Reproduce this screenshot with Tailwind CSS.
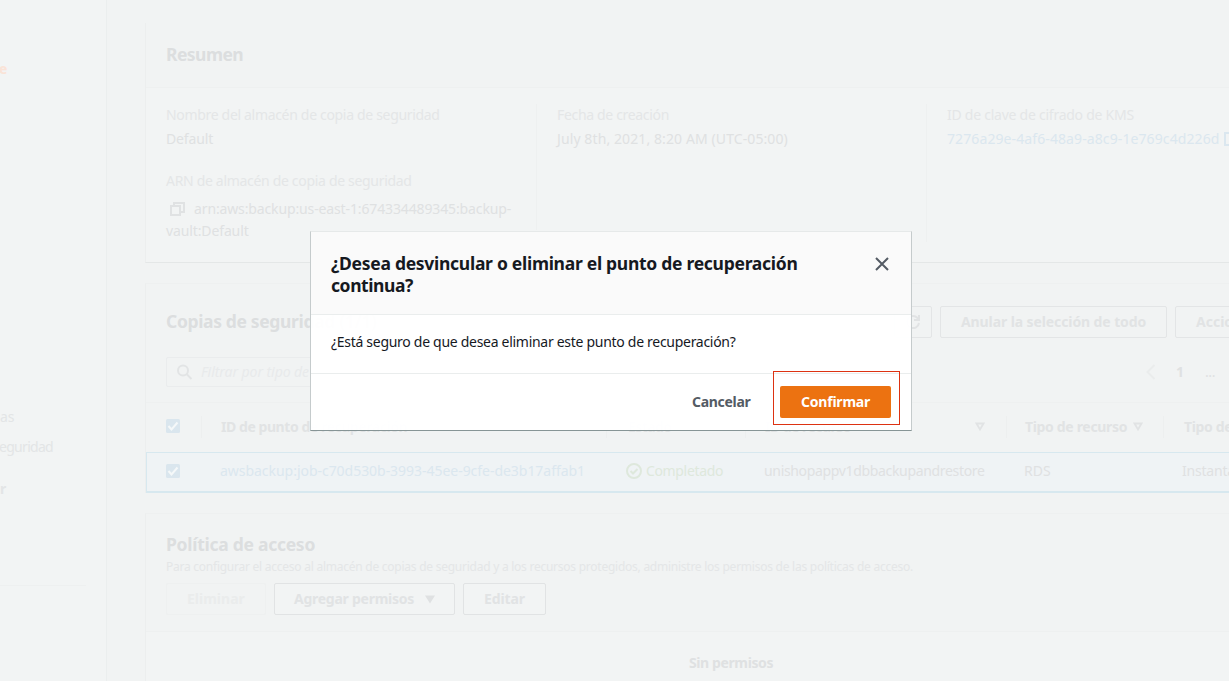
<!DOCTYPE html>
<html lang="es">
<head>
<meta charset="utf-8">
<title>AWS Backup</title>
<script src="https://cdn.jsdelivr.net/npm/@tailwindcss/browser@4"></script>
</head>
<body class="w-[1229px] h-[681px] overflow-hidden bg-[#f1f3f3] font-['Noto_Sans','Open_Sans',sans-serif] text-[14px] leading-[22px] text-[#dfe1e2]">
<div class="relative flex w-[1229px] h-[681px] overflow-hidden whitespace-nowrap">
  <aside class="w-[107px] shrink-0 border-r border-[#ebeeee] bg-[#f2f4f4] pt-[58px] flex flex-col text-[#e3e5e6]">
    <span class="-ml-px font-bold text-[#fae3d7]">e</span>
    <span class="mt-[326px]">as</span>
    <span class="mt-2 -ml-px tracking-[-0.7px]">eguridad</span>
    <span class="mt-[20px] font-bold">r</span>
    <hr class="mt-[85px] w-[86px] border-[#eef0f0]">
  </aside>
  <main class="w-[1200px] shrink-0 pl-[38px] pt-[23px] flex flex-col gap-5">
    <section class="h-[240px] shrink-0 border-l border-b border-l-[#eceeee] border-b-[#e4e7e7] bg-[#f2f4f4]">
      <header class="h-[65px] bg-[#f1f3f3] border-b border-[#eef0f0] pl-5 pt-5">
        <h2 class="text-[17.5px] font-bold text-[#dcdedf] tracking-[-0.55px]">Resumen</h2>
      </header>
      <div class="flex pt-4">
        <div class="w-[391px] h-[126px] pl-5 border-r border-[#eef0f0]">
          <div class="text-[#e4e6e7] tracking-[-0.32px]">Nombre del almacén de copia de seguridad</div>
          <div class="mt-0.5 tracking-[-0.15px]">Default</div>
          <div class="mt-5 text-[#e4e6e7] tracking-[-0.315px]">ARN de almacén de copia de seguridad</div>
          <div class="mt-1.5 flex items-center">
            <svg class="ml-1 mr-2 w-4 h-4" viewBox="0 0 16 16" fill="none" stroke="#e0e2e3" stroke-width="2"><path d="M1 5h9v9H1zM4 5V2h10v9h-4"/></svg>
            <span class="tracking-[-0.13px]">arn:aws:backup:us-east-1:674334489345:backup-</span>
          </div>
          <div class="tracking-[-0.12px]">vault:Default</div>
        </div>
        <div class="w-[390px] h-[138px] pl-5 border-r border-[#eef0f0]">
          <div class="text-[#e4e6e7] tracking-[-0.33px]">Fecha de creación</div>
          <div class="mt-0.5 tracking-[0.1px]">July 8th, 2021, 8:20 AM (UTC-05:00)</div>
        </div>
        <div class="pl-5">
          <div class="text-[#e4e6e7] tracking-[-0.25px]">ID de clave de cifrado de KMS</div>
          <div class="mt-0.5 flex items-center text-[#dbe7ef]"><span class="tracking-[0.1px]">7276a29e-4af6-48a9-a8c9-1e769c4d226d</span>
            <svg class="ml-1 w-4 h-4" viewBox="0 0 16 16" fill="none" stroke="#dbe7ef" stroke-width="2"><path d="M7 2H2v12h12V9M10 2h4v4M14 2 8 8"/></svg></div>
        </div>
      </div>
    </section>
    <section class="h-[210px] shrink-0 border-l border-t border-l-[#eceeee] border-t-[#eef0f0]">
      <div class="h-[119px] pl-5 pt-[22px] border-b border-[#eef0f0]">
        <div class="flex">
          <h2 class="w-[728px] pt-1 text-[17.5px] font-bold text-[#dcdedf] tracking-[-0.35px]">Copias de seguridad (1/1)</h2>
          <div class="flex gap-2 font-bold text-[#e1e3e4]">
            <div class="w-[38px] h-8 border border-[#e3e5e6] rounded-[2px] flex items-center justify-center">
              <svg class="w-4 h-4" viewBox="0 0 16 16" fill="none" stroke="#e1e3e4" stroke-width="2"><path d="M9 6h5V1M14 9a6 6 0 1 1-1.500-5L14 6"/></svg></div>
            <div class="w-[227px] h-8 border border-[#e3e5e6] rounded-[2px] pl-5 pt-1 tracking-[-0.1px]">Anular la selección de todo</div>
            <div class="w-[130px] h-8 border border-[#e3e5e6] rounded-[2px] pl-5 pt-1">Acciones</div>
          </div>
        </div>
        <div class="mt-[19px] flex">
          <div class="w-[980px] flex">
            <div class="w-[600px] h-[30px] border border-[#eaeced] rounded-[2px] flex pl-2.5 pt-[3px] italic text-[#e8eaeb] tracking-[-0.06px]">
              <svg class="w-4 h-4 mt-[3px] mr-2" viewBox="0 0 16 16" fill="none" stroke="#e2e4e5" stroke-width="2"><circle cx="6" cy="6.500" r="5"/><path d="m9.500 10 5 5"/></svg>
              <span>Filtrar por tipo de recurso</span>
            </div>
          </div>
          <div class="flex pt-1">
            <svg class="w-2.5 h-4 mt-[3px]" viewBox="0 0 10 16" fill="none" stroke="#eaecec" stroke-width="2"><path d="M8.500 1 1.500 8l7 7"/></svg>
            <span class="ml-5 w-[29px] font-bold text-[#dfe1e2]">1</span><span class="tracking-[-0.4px]">...</span>
          </div>
        </div>
      </div>
      <div class="grid grid-cols-[56px_405px_139px_261px_157px_200px] h-[49px] pt-[13px] font-bold text-[#e1e3e4]">
        <div class="pl-5 pt-[3px] h-[22px] border-r border-[#edefef]">
          <svg class="w-3.5 h-3.5" viewBox="0 0 14 14"><rect width="14" height="14" rx="1.500" fill="#dae6ee"/><path d="m2.500 7 3 3.500 6-7" fill="none" stroke="#f5f8f9" stroke-width="2"/></svg></div>
        <div class="pl-[19px] h-[22px] border-r border-[#edefef] tracking-[-0.44px]">ID de punto de recuperación</div>
        <div class="pl-[21px] h-[22px] border-r border-[#edefef] tracking-[-0.6px]">Estado</div>
        <div class="pl-[19px] pr-[21px] h-[22px] border-r border-[#edefef] flex justify-between items-center"><span class="tracking-[-0.53px]">ID de recurso</span>
          <svg class="w-2.5 h-2.5" viewBox="0 0 10 10" fill="none" stroke="#e1e3e4" stroke-width="1.800"><path d="M1.500 1.500h7L5 7.500z"/></svg></div>
        <div class="pl-[18px] h-[22px] border-r border-[#edefef] flex items-center"><span class="tracking-[-0.33px]">Tipo de recurso</span>
          <svg class="ml-1.5 w-2.5 h-2.5" viewBox="0 0 10 10" fill="none" stroke="#e1e3e4" stroke-width="1.800"><path d="M1.500 1.500h7L5 7.500z"/></svg></div>
        <div class="pl-5 tracking-[-0.33px]">Tipo de copia</div>
      </div>
      <div class="grid grid-cols-[55px_405px_139px_261px_157px_200px] h-[41px] pt-[7px] border border-[#d7e8ef] border-b-2 bg-[#eff3f5]">
        <div class="pl-[19px] pt-1">
          <svg class="w-3.5 h-3.5" viewBox="0 0 14 14"><rect width="14" height="14" rx="1.500" fill="#dae6ee"/><path d="m2.500 7 3 3.500 6-7" fill="none" stroke="#f5f8f9" stroke-width="2"/></svg></div>
        <div class="pl-[18px] text-[#dbe7ef] tracking-[-0.035px]">awsbackup:job-c70d530b-3993-45ee-9cfe-de3b17affab1</div>
        <div class="pl-[19px] h-[22px] flex items-center text-[#dee8dc]">
          <svg class="mr-1 w-4 h-4" viewBox="0 0 16 16" fill="none" stroke="#dee8dc" stroke-width="2"><circle cx="8" cy="8" r="7"/><path d="m4.500 8 2.500 2.500 4.500-4.500"/></svg>
          <span class="tracking-[-0.35px]">Completado</span></div>
        <div class="pl-[18px] tracking-[-0.335px]">unishopappv1dbbackupandrestore</div>
        <div class="pl-[17px]">RDS</div>
        <div class="pl-[18px] tracking-[-0.2px]">Instantánea</div>
      </div>
    </section>
    <section class="h-[200px] shrink-0 border-l border-t border-l-[#eceeee] border-t-[#eef0f0] bg-[#f2f4f4]">
      <header class="h-[118px] bg-[#f1f3f3] border-b border-[#eef0f0] pl-5 pt-[19px]">
        <h2 class="text-[17.5px] font-bold text-[#dcdedf] tracking-[-0.27px]">Política de acceso</h2>
        <p class="mt-1 text-[12px] leading-4 text-[#e4e6e7] tracking-[-0.249px]">Para configurar el acceso al almacén de copias de seguridad y a los recursos protegidos, administre los permisos de las políticas de acceso.</p>
        <div class="mt-2 flex gap-2 font-bold text-[#e1e3e4]">
          <div class="w-[100px] h-8 border border-[#eef0f0] rounded-[2px] pl-5 pt-1 text-[#eaecec]">Eliminar</div>
          <div class="w-[181px] h-8 border border-[#e1e3e4] rounded-[2px] pl-[19px] pt-1 bg-[#f2f4f4] flex"><span class="tracking-[-0.25px]">Agregar permisos</span>
            <svg class="ml-[11px] mt-[7px] w-2.5 h-2.5" viewBox="0 0 10 10" fill="#dfe1e2"><path d="M0 .5h10L5 8.500z"/></svg></div>
          <div class="w-[83px] h-8 border border-[#e1e3e4] rounded-[2px] pl-5 pt-1 bg-[#f2f4f4] tracking-[-0.1px]">Editar</div>
        </div>
      </header>
      <p class="pl-[543px] pt-5 font-bold text-[#dfe1e2] tracking-[-0.39px]">Sin permisos</p>
    </section>
  </main>

  <div role="dialog" class="absolute left-[310px] top-[231px] w-[602px] h-[200px] border border-x-[#c5cbcc] border-t-[#e6e9e9] border-b-[#879596] bg-white/97 text-[#16191f] flex flex-col">
    <header class="h-[83px] bg-[#fafafa] border-b border-[#eaeded] pl-5 pr-[22px] pt-5 flex justify-between">
      <h2 class="text-[17.5px] font-bold tracking-[-0.281px]">¿Desea desvincular o eliminar el punto de recuperación<br><span class="tracking-[-0.41px]">continua?</span></h2>
      <svg class="mt-[5px] w-3.5 h-3.5" viewBox="0 0 14 14" fill="none" stroke="#545b64" stroke-width="2"><path d="m1 1 12 12M13 1 1 13"/></svg>
    </header>
    <div class="h-[59px] border-b border-[#eaeded] pl-5 pt-4 tracking-[-0.29px]">¿Está seguro de que desea eliminar este punto de recuperación?</div>
    <footer class="relative flex-1 flex justify-end pt-3 pr-5 font-bold">
      <div class="w-[88px] pt-[5px] text-[#545b64] tracking-[-0.29px]">Cancelar</div>
      <div class="w-[111px] h-8 rounded-[2px] bg-[#ec7211] pl-[21px] pt-[5px] text-white tracking-[-0.22px]">Confirmar</div>
      <div class="absolute right-[11px] -top-[3px] w-[127px] h-[54px] border border-[#dd3212]"></div>
    </footer>
  </div>
</div>
</body>
</html>
